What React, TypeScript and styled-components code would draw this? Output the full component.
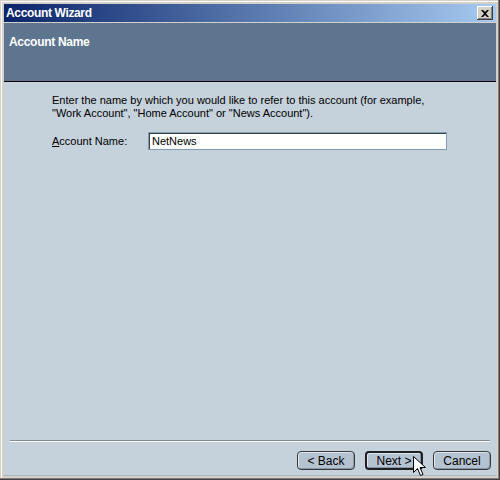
import React from "react";
import styled, { createGlobalStyle } from "styled-components";

const Global = createGlobalStyle`
  html, body { margin: 0; padding: 0; background: #d4d0c8; }
  * { box-sizing: border-box; }
`;

const Window = styled.div`
  position: relative;
  width: 500px;
  height: 480px;
  display: flex;
  flex-direction: column;
  background: #d4d0c8;
  padding: 4px 4px 4px 4px;
  box-shadow: inset -1px -1px 0 #404040, inset -2px -2px 0 #808080, inset 1px 1px 0 #d4d0c8, inset 2px 2px 0 #ffffff;
  font-family: "Liberation Sans", Arial, sans-serif;
`;

const TitleBar = styled.div`
  height: 18px;
  flex: none;
  display: flex;
  align-items: center;
  justify-content: space-between;
  padding: 0 3px 0 2px;
  background: linear-gradient(to right, #0a246a, #a6caf0);
`;

const TitleText = styled.span`
  color: #ffffff;
  font-weight: bold;
  font-size: 12px;
  letter-spacing: -0.35px;
`;

const CloseButton = styled.div`
  width: 16px;
  height: 14px;
  background: #d4d0c8;
  box-shadow: inset -1px -1px 0 #404040, inset 1px 1px 0 #ffffff, inset -2px -2px 0 #808080;
  display: flex;
  align-items: center;
  justify-content: center;
`;

const Panel = styled.div`
  flex: 1;
  display: flex;
  flex-direction: column;
  margin-top: 1px;
  background: #c5d1db;
  box-shadow: inset 0 -1px 0 #a8b4c0;
`;

const Header = styled.div`
  height: 59px;
  flex: none;
  background: #5e7590;
  border-bottom: 1px solid #000000;
  padding: 12px 5px 0;
`;

const HeaderTitle = styled.div`
  color: #ffffff;
  font-weight: bold;
  font-size: 12px;
  letter-spacing: -0.3px;
`;

const Body = styled.div`
  flex: 1;
  padding: 12px 0 0 48px;
  font-size: 11px;
  color: #000;
`;

const Para = styled.p`
  margin: 0;
  line-height: 13px;
`;

const FieldRow = styled.div`
  display: flex;
  align-items: center;
  margin-top: 12px;
`;

const Label = styled.label`
  width: 96px;
  flex: none;
`;

const Input = styled.input`
  width: 299px;
  height: 18px;
  font-family: inherit;
  font-size: 11px;
  padding: 0 3px;
  border: 1px solid #7f9db9;
  box-shadow: inset 1px 1px 0 #404040;
  background: #fff;
  outline: none;
`;

const Separator = styled.div`
  margin: 0 6px 0 6px;
  border-top: 1px solid #808a96;
  border-bottom: 1px solid #ffffff;
`;

const ButtonRow = styled.div`
  display: flex;
  justify-content: flex-end;
  gap: 10px;
  padding: 9px 5px 6px 0;
`;

const Button = styled.div<{ $default?: boolean }>`
  width: 58px;
  height: 19px;
  display: flex;
  align-items: center;
  justify-content: center;
  font-size: 12px;
  color: #000;
  border-radius: 4px;
  background: #b5c3d1;
  border: ${(p) => (p.$default ? "2px solid #202020" : "1px solid #3a3a3a")};
  box-shadow: inset 1px 1px 0 #dfe6ee, inset -1px -1px 0 #8796a6;
`;

const Cursor = styled.svg`
  position: absolute;
  left: 413px;
  top: 456px;
`;

export default function App() {
  return (
    <>
      <Global />
      <Window>
        <TitleBar>
          <TitleText>Account Wizard</TitleText>
          <CloseButton>
            <svg width="8" height="7" viewBox="0 0 8 7">
              <path d="M0 0h2l2 2 2-2h2L5 3.5 8 7H6L4 5 2 7H0l3-3.5z" fill="#000" />
            </svg>
          </CloseButton>
        </TitleBar>
        <Panel>
          <Header>
            <HeaderTitle>Account Name</HeaderTitle>
          </Header>
          <Body>
            <Para>Enter the name by which you would like to refer to this account (for example,</Para>
            <Para>"Work Account", "Home Account" or "News Account").</Para>
            <FieldRow>
              <Label>
                <u>A</u>ccount Name:
              </Label>
              <Input defaultValue="NetNews" />
            </FieldRow>
          </Body>
          <Separator />
          <ButtonRow>
            <Button>&lt; Back</Button>
            <Button $default>Next &gt;</Button>
            <Button>Cancel</Button>
          </ButtonRow>
        </Panel>
        <Cursor width="13" height="21" viewBox="0 0 13 21">
          <path d="M0.5 0.5v16l4-4 3 7 2.5-1-3-7h5.5z" fill="#fff" stroke="#000" strokeWidth="1" />
        </Cursor>
      </Window>
    </>
  );
}
